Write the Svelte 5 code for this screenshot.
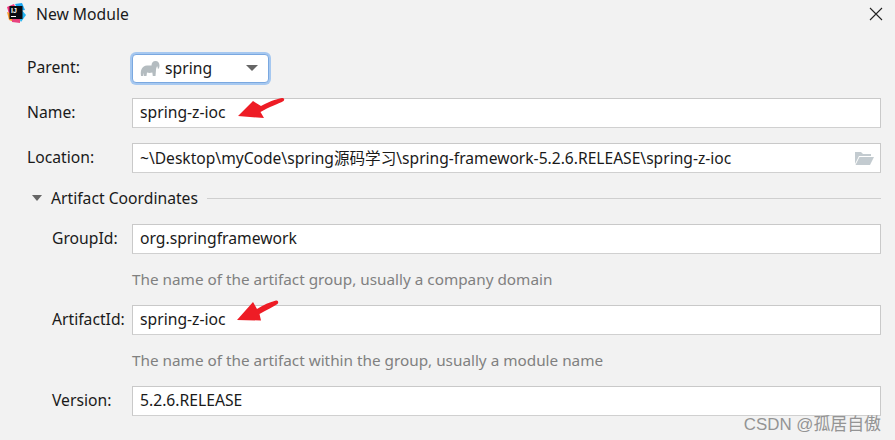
<script>
  let parent = 'spring';
  let name = 'spring-z-ioc';
  let location = '~\\Desktop\\myCode\\spring源码学习\\spring-framework-5.2.6.RELEASE\\spring-z-ioc';
</script>

<div class="dialog">
  <div class="titlebar">
    <svg class="logo" width="20" height="20" viewBox="0 0 20 20">
      <path d="M1 4 L8 1 L10 6 L3 11 Z" fill="#f5327c" />
      <path d="M9 1 L16 0 L19 7 L13 8 Z" fill="#19a5f0" />
      <path d="M15 6 L20 12 L15 19 L11 12 Z" fill="#23b4f2" />
      <path d="M1 9 L7 11 L8 19 L3 17 Z" fill="#fd9b2a" />
      <path d="M6 14 L14 14 L14 20 L6 19 Z" fill="#e8437f" />
      <rect x="3.500" y="3" width="13" height="13" fill="#0b0b10" />
      <text x="5" y="9.500" class="logo-text">IJ</text>
      <rect x="5" y="13" width="5" height="1" fill="#fff" />
    </svg>
    <span class="title">New Module</span>
    <svg class="close" width="14" height="14" viewBox="0 0 14 14">
      <path d="M1 1 L13 13 M13 1 L1 13" stroke="#222" stroke-width="1.1" fill="none" />
    </svg>
  </div>

  <div class="form">
    <div class="row parent-row">
      <label>Parent:</label>
      <div class="select">
        <svg class="gradle" width="20" height="17" viewBox="0 0 20 17">
          <path d="M1 16 C0 10 2 6 7 5.500 C9 5.300 10.500 5.800 11.500 5.500 C11.500 3 13 1 15.500 1 C18 1 19.500 3 19.500 5.500 C19.500 7 19 8.500 18 9 C17.500 8 18 6.800 17 6.300 C16.300 8 16 9 16 10 L15.500 16 L12.800 16 L12.300 12.500 C10.500 13 8.500 13 7 12.500 L6.500 16 L4 16 L4 12.800 L3.200 16 Z" fill="#b4bcc0" />
        </svg>
        <span>{parent}</span>
        <span class="caret"></span>
      </div>
    </div>

    <div class="row name-row">
      <label>Name:</label>
      <div class="input">{name}</div>
    </div>

    <div class="row location-row">
      <label>Location:</label>
      <div class="input path">
        <span>{location}</span>
        <svg width="20" height="15" viewBox="0 0 20 15">
          <path d="M1 1 H7 L9 3 H17 V5 H5 L1 13 Z" fill="#c3cbd0" />
          <path d="M5.500 6 H20 L16 14 H1.500 Z" fill="#c3cbd0" />
        </svg>
      </div>
    </div>

    <div class="section">
      <span class="tri"></span>
      <span>Artifact Coordinates</span>
      <span class="rule"></span>
    </div>

    <div class="nested">
      <div class="row">
        <label>GroupId:</label>
        <div class="input">org.springframework</div>
      </div>
      <div class="hint">The name of the artifact group, usually a company domain</div>
      <div class="row">
        <label>ArtifactId:</label>
        <div class="input">{name}</div>
      </div>
      <div class="hint">The name of the artifact within the group, usually a module name</div>
      <div class="row">
        <label>Version:</label>
        <div class="input">5.2.6.RELEASE</div>
      </div>
    </div>
  </div>

  <svg class="arrow arrow-name" width="50" height="26" viewBox="0 0 50 26">
    <path d="M45 1 C39 2 30 5.500 24 9 L16 4 L1 19 L27 21 L23.500 15 C32 10 41 7 46.500 4 C48 2.800 47 .6 45 1 Z" fill="#ee1c25" />
  </svg>
  <svg class="arrow arrow-artifact" width="44" height="28" viewBox="0 0 44 28">
    <path d="M40 1.500 C34 3 27 6 21 10 L17 3 L1 21 L25 21.500 L23.500 15 C30 11 37 8 41.500 5 C43 3.500 42 1 40 1.500 Z" fill="#ee1c25" />
  </svg>

  <div class="watermark">CSDN @孤居自傲</div>
</div>

<style>
  :global(body) {
    margin: 0;
  }

  .dialog {
    position: relative;
    width: 895px;
    height: 440px;
    overflow: hidden;
    background: #f2f2f2;
    font-family: "Noto Sans", "Noto Sans CJK SC", sans-serif;
    font-size: 15.7px;
    color: #1a1a1a;
    box-sizing: border-box;
  }

  .titlebar {
    display: flex;
    align-items: center;
    height: 28px;
    padding: 0 12px 0 6px;
  }

  .logo {
    flex: none;
    margin-bottom: 2px;
  }

  .logo-text {
    font-size: 7px;
    font-weight: bold;
    fill: #fff;
    font-family: "Liberation Sans", sans-serif;
  }

  .title {
    margin-left: 10px;
  }

  .close {
    margin-left: auto;
  }

  .form {
    padding: 25px 14px 0 27px;
  }

  .row {
    display: flex;
    align-items: center;
  }

  .row label {
    flex: none;
    padding-bottom: 2px;
  }

  .form > .row label {
    width: 105px;
  }

  .nested {
    padding-left: 25px;
  }

  .nested .row label {
    width: 80px;
  }

  .input {
    flex: 1;
    display: flex;
    align-items: center;
    justify-content: space-between;
    height: 30px;
    padding: 0 6px 2px 7px;
    box-sizing: border-box;
    background: #fff;
    border: 1px solid #c9c9c9;
    border-bottom-color: #d0d0d0;
    white-space: nowrap;
  }

  .path {
    font-size: 15.6px;
  }

  .path svg {
    margin-top: 2px;
  }

  .select {
    display: flex;
    align-items: center;
    width: 137px;
    height: 29px;
    padding: 0 10px 0 7px;
    box-sizing: border-box;
    background: #fff;
    border: 1px solid #7aa8e0;
    border-radius: 4px;
    box-shadow: 0 0 0 2px #a6c8f0;
  }

  .gradle {
    margin-right: 5px;
  }

  .caret {
    margin-left: auto;
    width: 0;
    height: 0;
    border-left: 6px solid transparent;
    border-right: 6px solid transparent;
    border-top: 6px solid #666;
  }

  .parent-row {
    height: 30px;
  }

  .name-row {
    margin-top: 15px;
  }

  .location-row {
    margin-top: 15px;
  }

  .section {
    display: flex;
    align-items: center;
    height: 20px;
    margin-top: 15px;
    padding-left: 5px;
    gap: 9px;
  }

  .tri {
    width: 0;
    height: 0;
    border-left: 5.500px solid transparent;
    border-right: 5.500px solid transparent;
    border-top: 6px solid #666;
  }

  .rule {
    flex: 1;
    height: 1px;
    background: #cfcfcf;
  }

  .nested {
    margin-top: 16px;
  }

  .hint {
    height: 51px;
    box-sizing: border-box;
    padding: 15px 0 0 80px;
    font-size: 15.3px;
    color: #808080;
  }

  .arrow {
    position: absolute;
  }

  .arrow-name {
    left: 237px;
    top: 97px;
  }

  .arrow-artifact {
    left: 236px;
    top: 299px;
  }

  .watermark {
    position: absolute;
    right: 14px;
    top: 410px;
    font-family: "Liberation Sans", "Noto Sans CJK SC", sans-serif;
    font-size: 16.9px;
    color: #949494;
  }
</style>
